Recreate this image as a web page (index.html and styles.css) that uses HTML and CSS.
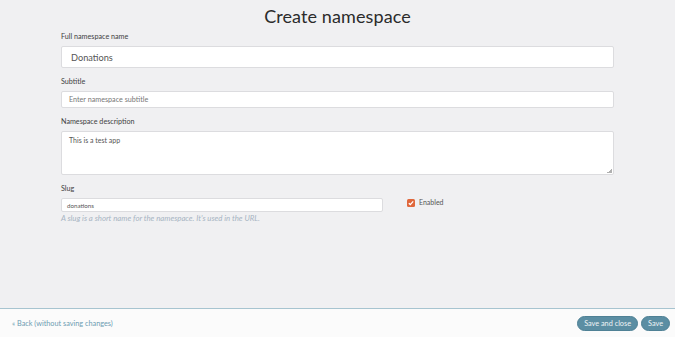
FILE: index.html
```html
<!DOCTYPE html>
<html>
<head>
<meta charset="utf-8">
<link rel="stylesheet" href="styles.css">
</head>
<body>
<div class="page">
  <main class="main">
    <h1 class="title">Create namespace</h1>
    <form class="form">
      <div class="field">
        <label class="label">Full namespace name</label>
        <div class="input input-lg">Donations</div>
      </div>
      <div class="field">
        <label class="label">Subtitle</label>
        <div class="input input-md placeholder">Enter namespace subtitle</div>
      </div>
      <div class="field">
        <label class="label">Namespace description</label>
        <div class="textarea">This is a test app<span class="grip"></span></div>
      </div>
      <div class="row">
        <div class="field slug">
          <label class="label">Slug</label>
          <div class="input input-sm">donations</div>
          <div class="help">A slug is a short name for the namespace. It's used in the URL.</div>
        </div>
        <div class="check">
          <span class="box"><svg viewBox="0 0 8 8" width="8" height="8"><path d="M1.8 4.2 L3.3 5.6 L6.2 2.4" fill="none" stroke="#fff" stroke-width="1.3"/></svg></span>
          <span class="check-label">Enabled</span>
        </div>
      </div>
    </form>
  </main>
  <footer class="footer">
    <a class="back">« Back (without saving changes)</a>
    <div class="buttons">
      <button class="btn" type="button">Save and close</button>
      <button class="btn" type="button">Save</button>
    </div>
  </footer>
</div>
</body>
</html>
```
FILE: styles.css
```css
* { box-sizing: border-box; }
html, body { margin: 0; padding: 0; }
body {
  font-family: "Lato", "Noto Sans", sans-serif;
  background: #f0f0f2;
  color: #444;
}
.page {
  width: 675px;
  height: 337px;
  display: flex;
  flex-direction: column;
}
.main {
  flex: 1;
  padding: 0 61px;
}
.title {
  margin: 5px 0 0;
  font-size: 18px;
  font-weight: 400;
  color: #2b2b2b;
  text-align: center;
  line-height: 22px;
  letter-spacing: 0.1px;
}
.form { display: flex; flex-direction: column; padding-top: 1px; }
.field { display: flex; flex-direction: column; }
.label {
  font-size: 7.2px;
  color: #3f3f3f;
  line-height: 10px;
  margin: 4px 0 4px;
}
.input {
  background: #fff;
  border: 1px solid #dcdcdf;
  border-radius: 2px;
  color: #555;
  display: flex;
  align-items: center;
}
.input-lg { height: 22px; font-size: 9.2px; padding-left: 9px; margin-bottom: 5px; }
.input-md { height: 17px; font-size: 7.2px; padding-left: 7px; margin-bottom: 5px; }
.input-sm { height: 14px; font-size: 6.2px; padding-left: 5px; width: 322px; }
.placeholder { color: #777; }
.textarea {
  position: relative;
  background: #fff;
  border: 1px solid #dcdcdf;
  border-radius: 2px;
  height: 44px;
  font-size: 7px;
  color: #555;
  padding: 4px 7px;
  margin-bottom: 5px;
}
.grip {
  position: absolute;
  right: 1px;
  bottom: 1px;
  width: 5px;
  height: 5px;
  background: linear-gradient(135deg, transparent 50%, #b0b0b0 50%);
}
.row { display: flex; align-items: flex-start; }
.help {
  font-size: 7.8px;
  font-style: italic;
  color: #a7b4c2;
  margin-top: 1px;
}
.check {
  display: flex;
  align-items: center;
  margin-left: 24px;
  margin-top: 17px;
}
.box {
  width: 8px;
  height: 8px;
  border-radius: 1.5px;
  background: #e0673b;
  display: flex;
  align-items: center;
  justify-content: center;
  margin-top: 2px;
}
.box svg { display: block; }
.check-label {
  font-size: 7px;
  color: #555;
  margin-left: 4px;
}
.footer {
  height: 29px;
  background: #fbfbfb;
  border-top: 1px solid #a7c4d0;
  display: flex;
  align-items: center;
  justify-content: space-between;
  padding: 0 5px 0 12px;
}
.back {
  font-size: 7.3px;
  color: #6d9bb2;
  text-decoration: none;
}
.buttons { display: flex; gap: 3px; }
.btn {
  font-family: inherit;
  font-size: 7.3px;
  color: #eef4f6;
  background: #5b8ea3;
  border: 1px solid #4f8195;
  border-radius: 8px;
  height: 15px;
  padding: 0 6px;
  line-height: 13px;
}
```
